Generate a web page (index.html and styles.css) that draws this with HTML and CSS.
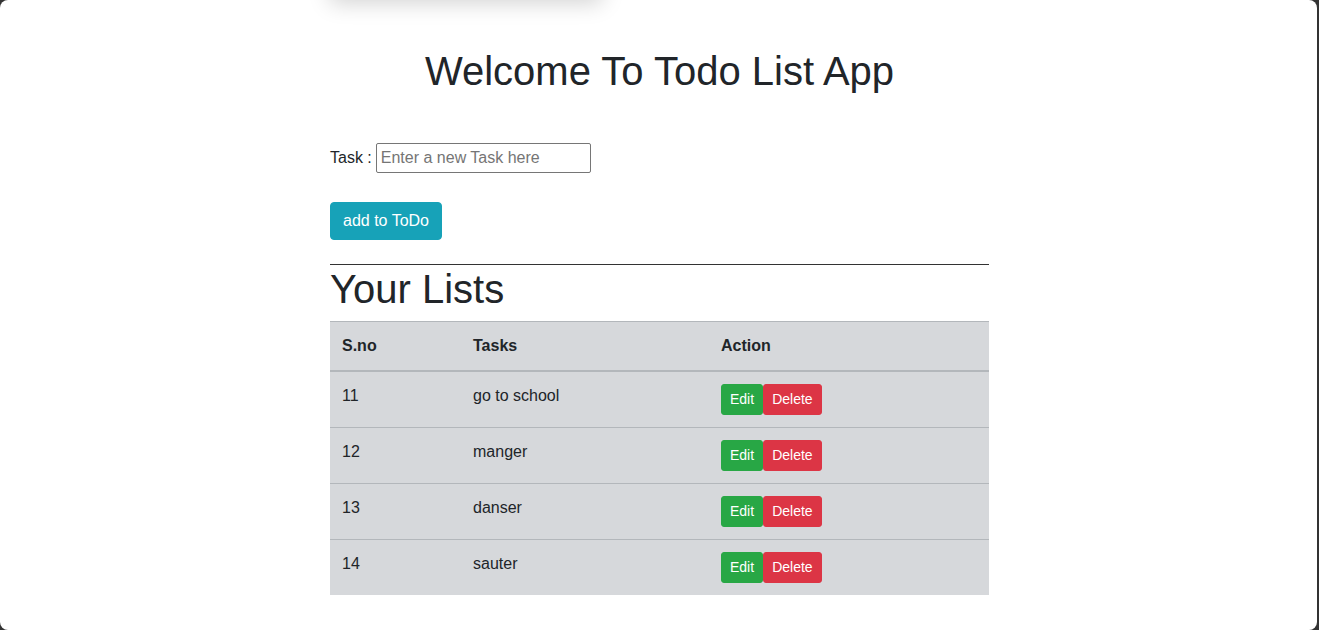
FILE: index.html
```html
<!DOCTYPE html>
<html lang="en">
<head>
<meta charset="utf-8">
<title>Todo List App</title>
<link rel="stylesheet" href="styles.css">
</head>
<body>
<div class="window">
  <div class="top-shadow"></div>
  <div class="container">
    <h1 class="title">Welcome To Todo List App</h1>
    <form class="task-form">
      <div class="task-row">
        <label for="task">Task :</label>
        <input id="task" type="text" placeholder="Enter a new Task here">
      </div>
      <button type="button" class="btn-add">add to ToDo</button>
    </form>
    <hr class="divider">
    <h2 class="lists-title">Your Lists</h2>
    <table class="todo-table">
      <thead>
        <tr><th class="c1">S.no</th><th class="c2">Tasks</th><th class="c3">Action</th></tr>
      </thead>
      <tbody>
        <tr><td>11</td><td>go to school</td><td><button class="btn-edit">Edit</button><button class="btn-del">Delete</button></td></tr>
        <tr><td>12</td><td>manger</td><td><button class="btn-edit">Edit</button><button class="btn-del">Delete</button></td></tr>
        <tr><td>13</td><td>danser</td><td><button class="btn-edit">Edit</button><button class="btn-del">Delete</button></td></tr>
        <tr><td>14</td><td>sauter</td><td><button class="btn-edit">Edit</button><button class="btn-del">Delete</button></td></tr>
      </tbody>
    </table>
  </div>
</div>
</body>
</html>
```
FILE: styles.css
```css
html, body {
  margin: 0;
  padding: 0;
  background: #333333;
  height: 630px;
  overflow: hidden;
}
.window {
  position: relative;
  width: 1317px;
  height: 630px;
  background: #ffffff;
  border-radius: 8px;
  overflow: hidden;
  font-family: "Liberation Sans", Arial, sans-serif;
  color: #212529;
  font-size: 16px;
  line-height: 1.5;
}
.top-shadow {
  position: absolute;
  left: 330px;
  top: -40px;
  width: 272px;
  height: 40px;
  background: #fff;
  box-shadow: 0 3px 22px rgba(0, 0, 0, 0.18);
}
.container {
  width: 659px;
  margin: 0 auto;
  padding-top: 47px;
  position: relative;
  left: 1px;
}
.title {
  margin: 0;
  font-size: 40px;
  font-weight: 400;
  line-height: 1.2;
  text-align: center;
}
.task-form {
  margin: 48px 0 0;
}
.task-row {
  display: flex;
  align-items: center;
  height: 30px;
}
.task-row label {
  margin-right: 4px;
}
.task-row input {
  box-sizing: border-box;
  width: 215px;
  height: 30px;
  padding: 0 4px;
  border: 1px solid #767676;
  border-radius: 2px;
  font-family: "Liberation Sans", Arial, sans-serif;
  font-size: 16px;
  color: #212529;
}
.task-row input::placeholder {
  color: #757575;
}
.btn-add {
  display: block;
  margin-top: 29px;
  height: 38px;
  padding: 0 12px;
  border: 1px solid #17a2b8;
  border-radius: 4px;
  background: #17a2b8;
  color: #fff;
  font-family: "Liberation Sans", Arial, sans-serif;
  font-size: 16px;
  line-height: 24px;
}
.divider {
  margin: 24px 0 0;
  border: 0;
  border-top: 1px solid #333;
  height: 0;
}
.lists-title {
  margin: 0 0 8px;
  font-size: 40px;
  font-weight: 400;
  line-height: 1.2;
}
.todo-table {
  width: 659px;
  border-collapse: collapse;
  background: #d6d8db;
}
.todo-table th, .todo-table td {
  padding: 12px;
  text-align: left;
  vertical-align: top;
  border-top: 1px solid #b3b7bb;
  line-height: 24px;
}
.todo-table th {
  font-weight: 700;
  border-bottom: 2px solid #b3b7bb;
}
.c1 { width: 107px; }
.c2 { width: 224px; }
.btn-edit, .btn-del {
  height: 31px;
  padding: 0 8px;
  border-radius: 3px;
  font-family: "Liberation Sans", Arial, sans-serif;
  font-size: 14px;
  line-height: 21px;
  color: #fff;
  vertical-align: top;
}
.btn-edit {
  background: #28a745;
  border: 1px solid #28a745;
}
.btn-del {
  background: #dc3545;
  border: 1px solid #dc3545;
}
```
